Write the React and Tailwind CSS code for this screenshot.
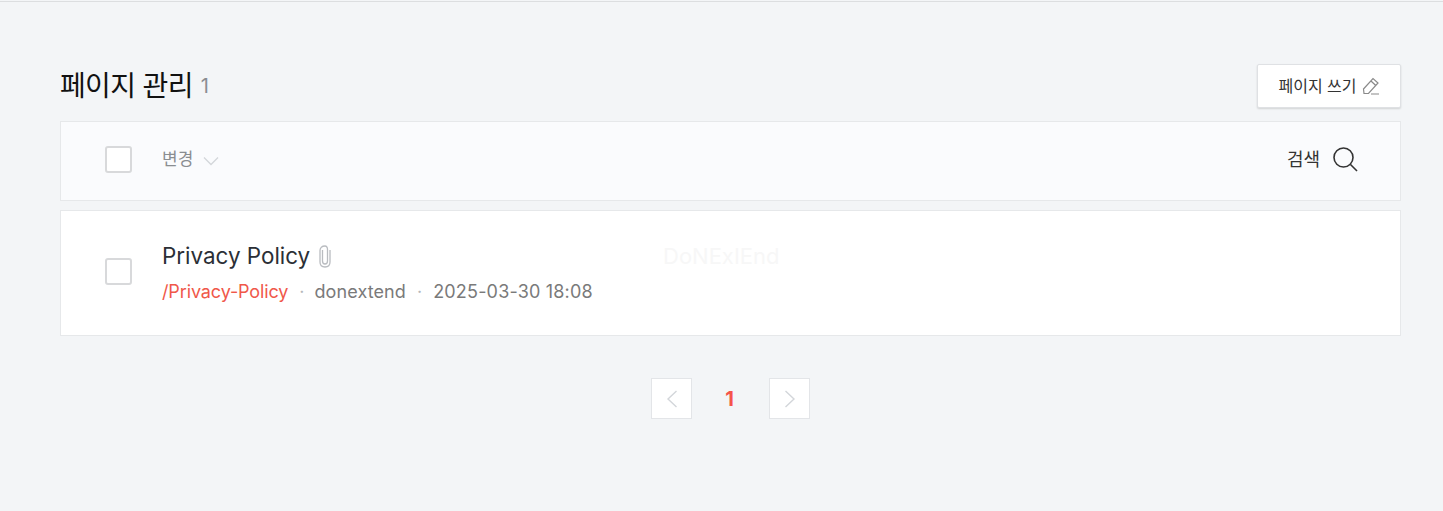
export default function App() {
  const font = { fontFamily: 'Inter, "Noto Sans CJK KR", sans-serif' };
  return (
    <div style={font} className="relative h-[511px] overflow-hidden bg-[#f3f5f7] pt-[64px] pl-[60px] pr-[42px]">
      <div className="absolute left-0 right-0 top-[1px] h-px bg-[#dcdee0]" />
      <div className="flex items-start justify-between h-[57px]">
        <div className="flex items-center h-[44px]">
          <h1 className="text-[28px] leading-[44px] font-normal text-[#111] tracking-[-0.65px]">페이지 관리</h1>
          <span className="ml-[8px] text-[20px] text-[#8a8d91]">1</span>
        </div>
        <button className="flex items-center justify-center w-[144px] h-[44px] bg-white border border-[#dfe1e4] rounded-[2px] shadow-[0_1px_2px_rgba(0,0,0,0.14)] text-[16px] text-[#333]">
          페이지 쓰기
          <svg className="ml-[5px]" width="18" height="18" viewBox="0 0 18 18" fill="none" stroke="#8a8a8a" strokeWidth="1.2">
            <path d="M1.5 12 L11 1.5 L16 6 L6.5 16.5 L2 16.5 Z M9 4 L13.8 8.5 M9 17 H17" />
          </svg>
        </button>
      </div>

      <div className="flex items-center justify-between h-[80px] bg-[#fafbfd] border border-[#e6e8ea] pl-[44px] pr-[42px]">
        <div className="flex items-center mb-[3px]">
          <div className="w-[27px] h-[27px] bg-white border-2 border-[#d8d9db] rounded-[3px]" />
          <span className="ml-[30px] text-[17px] text-[#8a8d91]">변경</span>
          <svg className="ml-[10px] mt-[2px]" width="16" height="10" viewBox="0 0 16 10" fill="none" stroke="#d3d6da" strokeWidth="1.3">
            <path d="M1 1.5 L8 8.5 L15 1.5" />
          </svg>
        </div>
        <div className="flex items-center mb-[4px]">
          <span className="text-[18px] text-[#333]">검색</span>
          <svg className="ml-[12px]" width="26" height="26" viewBox="0 0 26 26" fill="none" stroke="#333" strokeWidth="1.6">
            <circle cx="11.5" cy="11.5" r="9.5" />
            <path d="M18.5 18.5 L25 25" />
          </svg>
        </div>
      </div>

      <div className="relative flex items-center h-[126px] mt-[9px] bg-white border border-[#e6e8ea] pl-[44px]">
        <div className="w-[27px] h-[27px] mb-[3px] bg-white border-2 border-[#d8d9db] rounded-[3px]" />
        <div className="ml-[30px] flex flex-col">
          <div className="flex items-center h-[30px]">
            <span className="text-[22.4px] leading-[30px] text-[#2b2f36]">Privacy Policy</span>
            <svg className="ml-[8px]" width="14" height="24" viewBox="0 0 14 24" fill="none" stroke="#b9bcc0" strokeWidth="1.3">
              <path d="M4.5 6 V17 C4.5 19 5.5 20 7 20 C8.5 20 9.5 19 9.5 17 V5.5 C9.5 3 8.5 2 7 2 C4 2 2 3.5 2 6.5 V18 C2 21 4 23 7 23 C10 23 12 21 12 18 V6" />
            </svg>
          </div>
          <div className="flex items-center mt-[8px] text-[18px] leading-[26px] text-[#7a7a7a]">
            <span className="text-[#f0584a] tracking-[-0.12px]">/Privacy-Policy</span>
            <span className="ml-[11px] mr-[10px] text-[#b5b7ba]">·</span>
            <span className="tracking-[0.1px]">donextend</span>
            <span className="ml-[11px] mr-[11px] text-[#b5b7ba]">·</span>
            <span className="tracking-[0.18px]">2025-03-30 18:08</span>
          </div>
        </div>
        <span className="absolute left-[602px] top-[29px] text-[22px] text-[#f7f7f7]">DoNExIEnd</span>
      </div>

      <div className="flex items-center justify-center mt-[42px]">
        <div className="flex items-center justify-center w-[41px] h-[41px] bg-white border border-[#e3e5e8]">
          <svg width="12" height="18" viewBox="0 0 12 18" fill="none" stroke="#d3d6da" strokeWidth="1.4"><path d="M10.5 1 L2 9 L10.5 17" /></svg>
        </div>
        <span className="w-[77px] pr-[2px] pt-[1px] text-center text-[20px] font-bold text-[#f5544a]">1</span>
        <div className="flex items-center justify-center w-[41px] h-[41px] bg-white border border-[#e3e5e8]">
          <svg width="12" height="18" viewBox="0 0 12 18" fill="none" stroke="#d3d6da" strokeWidth="1.4"><path d="M1.5 1 L10 9 L1.5 17" /></svg>
        </div>
      </div>
    </div>
  );
}
